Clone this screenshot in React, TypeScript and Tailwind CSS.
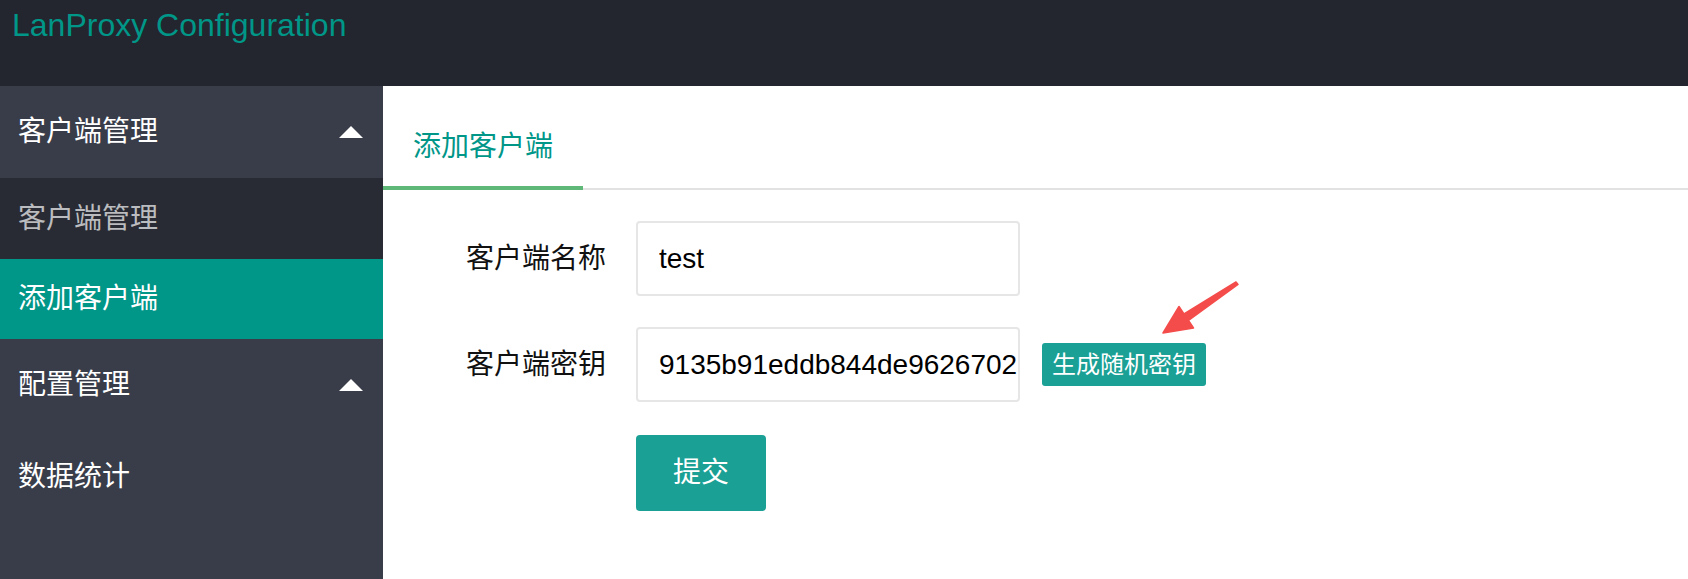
import React from "react";

const FONT = '"Liberation Sans", "Noto Sans CJK SC", sans-serif';

const Caret = () => (
  <svg width="24" height="12" viewBox="0 0 24 12" className="block">
    <polygon points="12,0 24,12 0,12" fill="#ffffff" />
  </svg>
);

const NavGroup = ({ title }: { title: string }) => (
  <div className="h-[92px] flex items-center justify-between pl-[18px] pr-[20px] text-white">
    <span className="text-[28px]">{title}</span>
    <Caret />
  </div>
);

const FormRow = ({
  label,
  children,
}: {
  label: string;
  children: React.ReactNode;
}) => (
  <div className="flex items-center">
    <label className="w-[253px] pr-[30px] text-right text-[28px] text-[#111]">
      {label}
    </label>
    {children}
  </div>
);

const Arrow = () => (
  <svg
    width="90"
    height="65"
    viewBox="0 0 90 65"
    className="absolute left-[772px] top-[189px]"
  >
    <polygon
      points="81,7 29,39 24,31.5 8,58 38.5,53 33.5,45.5 83,9.5"
      fill="#f44c4a"
      stroke="#f44c4a"
      strokeWidth="1.5"
      strokeLinejoin="round"
    />
  </svg>
);

export default function App() {
  return (
    <div className="h-[579px] flex flex-col overflow-hidden" style={{ fontFamily: FONT }}>
      {/* top bar */}
      <header className="h-[86px] shrink-0 bg-[#23262e] pl-[12px] pt-[9px]">
        <h1 className="text-[32px] leading-none text-[#009688]">LanProxy Configuration</h1>
      </header>

      <div className="flex flex-1 min-h-0">
        {/* side menu */}
        <aside className="w-[383px] shrink-0 bg-[#393d49]">
          <NavGroup title="客户端管理" />
          <div className="bg-[#282b33]">
            <div className="h-[81px] flex items-center pl-[18px] text-[28px] text-white/70">
              客户端管理
            </div>
            <div className="h-[80px] flex items-center pl-[18px] text-[28px] text-white bg-[#009688]">
              添加客户端
            </div>
          </div>
          <NavGroup title="配置管理" />
          <div className="h-[92px] flex items-center pl-[18px] text-[28px] text-white">
            数据统计
          </div>
        </aside>

        {/* main */}
        <main className="relative flex-1 bg-white">
          <div className="mt-[18px] flex border-b-2 border-[#e2e2e2]">
            <div className="h-[86px] -mb-[2px] px-[30px] pt-[4px] flex items-center border-b-4 border-[#5fb878] text-[28px] text-[#009688]">
              添加客户端
            </div>
          </div>

          <div className="pt-[31px] flex flex-col gap-[31px]">
            <FormRow label="客户端名称">
              <input
                readOnly
                value="test"
                className="w-[384px] h-[75px] border-2 border-[#e6e6e6] rounded-[4px] pl-[21px] text-[28px] text-black outline-none"
                style={{ fontFamily: FONT }}
              />
            </FormRow>
            <FormRow label="客户端密钥">
              <input
                readOnly
                value="9135b91eddb844de9626702"
                className="w-[384px] h-[75px] border-2 border-[#e6e6e6] rounded-[4px] pl-[21px] pr-0 text-[28px] text-black outline-none"
                style={{ fontFamily: FONT }}
              />
              <button className="ml-[22px] h-[43px] px-[10px] rounded-[3px] bg-[#1aa094] text-white text-[24px] leading-none">
                生成随机密钥
              </button>
            </FormRow>
            <div className="flex pl-[253px] pt-[2px]">
              <button className="w-[130px] h-[76px] rounded-[4px] bg-[#1aa094] text-white text-[28px]">
                提交
              </button>
            </div>
          </div>

          <Arrow />
        </main>
      </div>
    </div>
  );
}
